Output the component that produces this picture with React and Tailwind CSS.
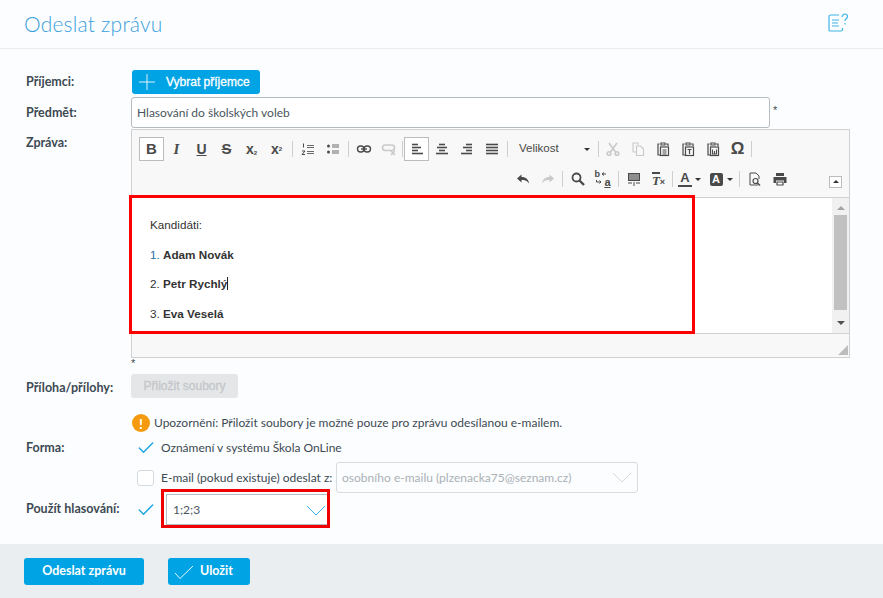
import { Check, Plus } from 'lucide-react';

const ui = { fontFamily: 'Lato, sans-serif' };
const arial = { fontFamily: '"Liberation Sans", Arial, sans-serif' };

function Ico({ children, dim }) {
  return (
    <svg width="16" height="16" viewBox="0 0 16 16" fill="none" stroke="currentColor" strokeWidth="1.6" className={dim ? 'text-[#c9c9c9]' : 'text-[#4a4a4a]'}>
      {children}
    </svg>
  );
}

function Btn({ children, active, className = 'w-[25px]' }) {
  return (
    <div className={`${className} h-[24px] shrink-0 flex items-center justify-center ${active ? 'border border-[#bcbcbc] bg-white' : ''}`}>
      {children}
    </div>
  );
}

function Sep({ w = 'w-[6px]' }) {
  return (
    <div className={`${w} h-[24px] shrink-0 flex items-center justify-center`}>
      <div className="w-px h-[16px] bg-[#cfcfcf]" />
    </div>
  );
}

function Lines({ rows }) {
  return <Ico>{rows.map(([a, b], i) => <path key={i} d={`M${a} ${3.5 + i * 3}H${b}`} />)}</Ico>;
}

function Clipboard({ letter }) {
  return (
    <Ico>
      <path d="M4.5 3H3v11h2M6 2h4v2H6zM11 3h2v2" strokeWidth="1.2" />
      <rect x="5.5" y="6" width="8" height="8.5" strokeWidth="1.2" />
      {letter === 'lines' && <path d="M7.5 9h4M7.5 11h4M7.5 13h4" strokeWidth="1" />}
      {letter === 'T' && <path d="M7.5 8.5h4M9.5 8.5V13" strokeWidth="1.2" />}
      {letter === 'W' && <path d="M7.5 8.5V13h4V8.5M9.5 10v3" strokeWidth="1.1" />}
    </Ico>
  );
}

function SelectArrow({ className }) {
  return (
    <svg width="20" height="11" viewBox="0 0 20 11" fill="none" stroke="currentColor" strokeWidth="1" className={`ml-auto ${className}`}>
      <path d="M1 1l9 9 9-9" />
    </svg>
  );
}

function Toolbar() {
  return (
    <div className="h-[68px] bg-[#f8f8f8] border-b border-[#d1d1d1] pt-[7px] pl-[7px]">
      <div className="flex items-center h-[24px]">
        <Btn active><span className="text-[15px] font-bold text-[#4a4a4a]" style={arial}>B</span></Btn>
        <Btn><span className="text-[15px] font-bold italic text-[#4a4a4a]" style={{ fontFamily: '"Liberation Serif", serif' }}>I</span></Btn>
        <Btn><span className="text-[14px] font-bold underline text-[#4a4a4a]" style={arial}>U</span></Btn>
        <Btn><span className="text-[15px] font-bold line-through text-[#4a4a4a]" style={arial}>S</span></Btn>
        <Btn><span className="text-[14px] font-bold text-[#4a4a4a]" style={arial}>x<sub className="text-[6px]">2</sub></span></Btn>
        <Btn><span className="text-[14px] font-bold text-[#4a4a4a]" style={arial}>x<sup className="text-[6px]">2</sup></span></Btn>
        <Sep />
        <Btn>
          <Ico>
            <path d="M7 4.500h7M7 6.500h7M7 10.500h7M7 12.500h7" strokeWidth="1.1" stroke="#6a6a6a" />
            <path d="M3.500 2.500v4M2 10h3l-3 3.500h3" strokeWidth="1" />
          </Ico>
        </Btn>
        <Btn>
          <Ico>
            <circle cx="3.500" cy="5" r="1.500" fill="currentColor" stroke="none" />
            <circle cx="3.500" cy="11" r="1.500" fill="currentColor" stroke="none" />
            <path d="M7 4h7M7 6h7M7 10h7M7 12h7" strokeWidth="1.100" stroke="#6a6a6a" />
          </Ico>
        </Btn>
        <Sep />
        <Btn>
          <Ico>
            <rect x="1.500" y="5" width="6.500" height="6" rx="3" strokeWidth="1.4" />
            <rect x="8" y="5" width="6.500" height="6" rx="3" strokeWidth="1.4" />
            <path d="M5 8h6" strokeWidth="1.4" />
          </Ico>
        </Btn>
        <Btn>
          <Ico dim>
            <rect x="1.500" y="4" width="12" height="5.500" rx="2.700" />
            <path d="M10 10l4 4M14 10l-4 4" />
          </Ico>
        </Btn>
        <Sep w="w-[3px]" />
        <Btn active><Lines rows={[[3, 9], [3, 12], [3, 9], [3, 14]]} /></Btn>
        <Btn><Lines rows={[[5, 11], [3, 13], [5, 11], [2, 14]]} /></Btn>
        <Btn><Lines rows={[[7, 13], [4, 13], [7, 13], [2, 13]]} /></Btn>
        <Btn><Lines rows={[[2, 14], [2, 14], [2, 14], [2, 14]]} /></Btn>
        <Sep />
        <div className="w-[86px] h-[24px] shrink-0 flex items-center pl-[9px] text-[11.5px] text-[#474747]" style={arial}>
          <span>Velikost</span>
          <span className="ml-auto mr-[6px] w-0 h-0 border-x-[3px] border-x-transparent border-t-[3px] border-t-[#333333]" />
        </div>
        <Sep w="w-[4px]" />
        <Btn>
          <Ico dim>
            <path d="M4 2l6.500 9M12 2L5.500 11" />
            <circle cx="4" cy="12.500" r="1.800" />
            <circle cx="12" cy="12.500" r="1.800" />
          </Ico>
        </Btn>
        <Btn>
          <Ico dim>
            <path d="M8 4V2H3v9h3M6.500 5h4l3 3v6.500h-7z" strokeWidth="1.100" />
          </Ico>
        </Btn>
        <Btn><Clipboard letter="lines" /></Btn>
        <Btn><Clipboard letter="T" /></Btn>
        <Btn><Clipboard letter="W" /></Btn>
        <Btn><span className="text-[17px] font-bold text-[#4a4a4a]" style={arial}>Ω</span></Btn>
        <Sep w="w-[3px]" />
      </div>

      <div className="flex items-center h-[24px] mt-[6px] ml-[371px]">
        <Btn>
          <Ico><path d="M6.500 3.500L2 7.500l4.500 4V9c3.500 0 5.500.5 7.500 3.500C13.500 8.500 11 6 6.500 6z" fill="currentColor" stroke="none" /></Ico>
        </Btn>
        <Btn>
          <Ico dim><path d="M9.500 3.500l4.500 4-4.500 4V9C6 9 4 9.500 2 12.500 2.500 8.500 5 6 9.500 6z" fill="currentColor" stroke="none" /></Ico>
        </Btn>
        <Sep w="w-[5px]" />
        <Btn>
          <Ico>
            <circle cx="6.500" cy="6.500" r="4" strokeWidth="1.800" />
            <path d="M9.500 9.500l4.500 4.500" strokeWidth="2.400" />
          </Ico>
        </Btn>
        <Btn>
          <div className="relative w-[16px] h-[16px] text-[#4a4a4a]" style={arial}>
            <svg width="16" height="16" viewBox="0 0 16 16" fill="none" stroke="currentColor" strokeWidth="1" className="absolute inset-0">
              <path d="M7 3h4M9 1.500L7 3l2 1.500M1.500 9v2H6M4.500 9.500L6 11l-1.500 1.500" />
            </svg>
            <span className="absolute left-0 -top-[3px] text-[9px] leading-[12px] font-bold">b</span>
            <span className="absolute right-0 bottom-[-1px] text-[11px] leading-[12px] font-bold underline">a</span>
          </div>
        </Btn>
        <Sep />
        <Btn>
          <Ico>
            <path d="M2 2h12v8H2z" fill="currentColor" stroke="none" />
            <path d="M3 4h10M3 6h10M3 8h10" stroke="#f8f8f8" strokeWidth="0.800" />
            <path d="M2 12h4M10 12h4M8 11v4" strokeWidth="1" />
          </Ico>
        </Btn>
        <Btn>
          <div className="flex items-end text-[#4a4a4a] font-bold italic leading-none" style={{ fontFamily: '"Liberation Serif", serif' }}>
            <span className="text-[13px] border-t-2 border-[#4a4a4a]">T</span>
            <span className="text-[9px] not-italic" style={arial}>×</span>
          </div>
        </Btn>
        <Sep w="w-[3px]" />
        <div className="w-[31px] h-[24px] shrink-0 flex items-center justify-center gap-[3px]">
          <span className="text-[13px] leading-[14px] font-bold text-[#4a4a4a] border-b-2 border-[#4a4a4a] px-[2px]" style={arial}>A</span>
          <span className="w-0 h-0 border-x-[3px] border-x-transparent border-t-[3px] border-t-[#333333]" />
        </div>
        <div className="w-[32px] h-[24px] shrink-0 flex items-center justify-center gap-[4px]">
          <span className="w-[13px] h-[13px] rounded-[2px] bg-[#4a4a4a] text-white text-[11px] font-bold leading-[13px] text-center" style={arial}>A</span>
          <span className="w-0 h-0 border-x-[3px] border-x-transparent border-t-[3px] border-t-[#333333]" />
        </div>
        <Sep w="w-[5px]" />
        <Btn>
          <Ico>
            <path d="M11 14H3V2h6l3 3v3" strokeWidth="1" />
            <circle cx="8.500" cy="10" r="2.500" strokeWidth="1.200" />
            <path d="M10.500 12l2.500 2.500" strokeWidth="1.400" />
          </Ico>
        </Btn>
        <Btn>
          <Ico>
            <path d="M4 2h8v3H4z" fill="currentColor" stroke="none" />
            <path d="M1.500 6h13v6H12V9.500H4V12H1.500z" fill="currentColor" stroke="none" />
            <path d="M5 11h6v3H5z" strokeWidth="1.200" />
          </Ico>
        </Btn>
        <div className="ml-[37px] w-[13px] h-[12px] mt-[5px] border border-[#bcbcbc] bg-white flex items-center justify-center">
          <span className="w-0 h-0 border-x-[3px] border-x-transparent border-b-[3px] border-b-[#333333]" />
        </div>
      </div>
    </div>
  );
}

function Editor() {
  return (
    <div className="w-[719px] h-[229px] border border-[#d1d1d1] flex flex-col bg-white">
      <Toolbar />
      <div className="h-[136px] flex border-b border-[#d1d1d1]">
        <div className="flex-1 pt-[19px] pl-[18px] text-[11.7px] leading-[16px] text-[#333333]" style={arial}>
          <p>Kandidáti:</p>
          <p className="mt-[14px]"><span className="text-[#1f6fa5]">1.</span> <b>Adam Novák</b></p>
          <p className="mt-[13px]">2. <b className="border-r border-[#222222]">Petr Rychlý</b></p>
          <p className="mt-[14px]">3. <b>Eva Veselá</b></p>
        </div>
        <div className="w-[17px] bg-[#f1f1f1] flex flex-col items-center pt-[8px]">
          <span className="w-0 h-0 border-x-[4px] border-x-transparent border-b-[4px] border-b-[#a3a3a3]" />
          <div className="w-[13px] h-[95px] bg-[#c1c1c1] mt-[5px]" />
          <span className="w-0 h-0 border-x-[4px] border-x-transparent border-t-[4px] border-t-[#505050] mt-[11px]" />
        </div>
      </div>
      <div className="flex-1 bg-[#f8f8f8] flex items-end justify-end pb-[2px] pr-[1px]">
        <svg width="10" height="10" viewBox="0 0 10 10"><path d="M10 0v10H0z" fill="#bdbdbd" /></svg>
      </div>
    </div>
  );
}

function Label({ children, className = '' }) {
  return <div className={`w-[105px] shrink-0 text-[12.5px] font-bold text-[#3c4a53] ${className}`}>{children}</div>;
}

function BlueButton({ children, className = '' }) {
  return (
    <div className={`bg-[#00a4e4] rounded-[3px] text-white font-bold flex items-center ${className}`}>
      {children}
    </div>
  );
}

export default function App() {
  return (
    <div className="h-screen w-full overflow-hidden relative flex flex-col bg-[#fcfdfe] text-[12px] text-[#3c4a53]" style={ui}>
      {/* Header */}
      <div className="h-[49px] shrink-0 border-b border-[#e9edf0] flex items-center justify-between pl-[24px] pr-[35px]">
        <h1 className="text-[21px] font-light text-[#3a9fdc] tracking-[0.2px]">Odeslat zprávu</h1>
        <svg width="20" height="19" viewBox="0 0 20 19" fill="none" stroke="#3fb4e8" strokeWidth="1.200" className="mb-[4px]">
          <path d="M11 2H2.500Q1 2 1 3.500V17q0 1 1 1h11q1.500 0 1.500-1.500V15" />
          <path d="M4 7h7M4 10h6M4 13h7" />
          <path d="M14 4q.5-3 3-3t2.500 2.500c0 2-2.500 2-2.500 4.500M17 10v1.500" />
        </svg>
      </div>

      {/* Form */}
      <div className="flex-1 pl-[26px] pt-[21px]">
        <div className="flex items-center h-[24px]">
          <Label>Příjemci:</Label>
          <BlueButton className="w-[128px] h-[24px] ml-px text-[12px]">
            <Plus size={26} strokeWidth={0.8} className="ml-[2px] mr-[6px]" />
            <span className="font-normal [-webkit-text-stroke:0.3px_white]" style={arial}>Vybrat příjemce</span>
          </BlueButton>
        </div>

        <div className="flex items-center h-[31px] mt-[3px]">
          <Label className="pt-[2px]">Předmět:</Label>
          <div className="w-[639px] h-[31px] border border-[#b4bcc1] rounded-[3px] bg-white flex items-center pl-[5px] pt-[1px] text-[#4a5660]">
            Hlasování do školských voleb
          </div>
          <span className="ml-[3px] mb-[4px] text-[11px]" style={arial}>*</span>
        </div>

        <div className="flex mt-px">
          <Label className="pt-[5px]">Zpráva:</Label>
          <Editor />
        </div>

        <div className="ml-[105px] h-[16px] text-[11px] leading-[11px]" style={arial}>*</div>

        <div className="flex items-center h-[24px]">
          <Label className="pt-[4px]">Příloha/přílohy:</Label>
          <div className="w-[107px] h-[24px] rounded-[3px] bg-[#e5e6e7] flex items-center justify-center text-[12px] text-[#c3c7ca] [-webkit-text-stroke:0.3px_#c3c7ca]" style={arial}>
            Přiložit soubory
          </div>
        </div>

        <div className="flex items-center h-[18px] mt-[16px] ml-[106px]">
          <div className="w-[18px] h-[18px] rounded-full bg-[#f59a0c] text-white flex items-center justify-center font-bold text-[14px]">!</div>
          <span className="ml-[4px]">Upozornění: Přiložit soubory je možné pouze pro zprávu odesílanou e-mailem.</span>
        </div>

        <div className="flex items-center h-[20px] mt-[6px]">
          <Label>Forma:</Label>
          <Check size={20} strokeWidth={1.800} className="ml-[5px] text-[#1ea7e0]" />
          <span className="ml-[5px]">Oznámení v systému Škola OnLine</span>
        </div>

        <div className="flex items-center h-[31px] mt-[4px] ml-[105px]">
          <div className="w-[17px] h-[16px] ml-[6px] shrink-0 border border-[#d5dade] rounded-[3px] bg-white" />
          <span className="ml-[7px] w-[175px] shrink-0 whitespace-nowrap">E-mail (pokud existuje) odeslat z:</span>
          <div className="w-[302px] h-[31px] border border-[#d8dcdf] rounded-[3px] flex items-center pl-[5px] pr-[5px] text-[#aab1b6]">
            osobního e-mailu (plzenacka75@seznam.cz)
            <SelectArrow className="text-[#d5d8db]" />
          </div>
        </div>

        <div className="flex items-center h-[31px] mt-px">
          <Label>Použít hlasování:</Label>
          <Check size={20} strokeWidth={1.800} className="ml-[5px] text-[#1ea7e0]" />
          <div className="ml-[10px] w-[162px] h-[31px] border border-[#b4bcc1] bg-white flex items-center pl-[6px] pr-[1px] pt-[1px] text-[#4a5660]">
            1;2;3
            <SelectArrow className="text-[#3fb4e8]" />
          </div>
        </div>
      </div>

      {/* Footer */}
      <div className="h-[54px] shrink-0 bg-[#ebeef0] flex items-center pl-[24px] gap-[24px] pt-[1px]">
        <BlueButton className="w-[120px] h-[27px] justify-center text-[12.5px]">Odeslat zprávu</BlueButton>
        <BlueButton className="w-[82px] h-[27px] text-[12.5px]">
          <svg width="20" height="14" viewBox="0 0 20 14" fill="none" stroke="white" strokeWidth="0.900" className="ml-[6px] mr-[6px]">
            <path d="M1 8l5 5.500L19 1" />
          </svg>
          Uložit
        </BlueButton>
      </div>

      {/* Red annotation frames */}
      <div className="absolute left-[129px] top-[195px] w-[566px] h-[139px] border-[3px] border-[#ff0000] pointer-events-none" />
      <div className="absolute left-[161px] top-[489px] w-[169px] h-[39px] border-[3px] border-[#f00000] pointer-events-none" />
    </div>
  );
}
